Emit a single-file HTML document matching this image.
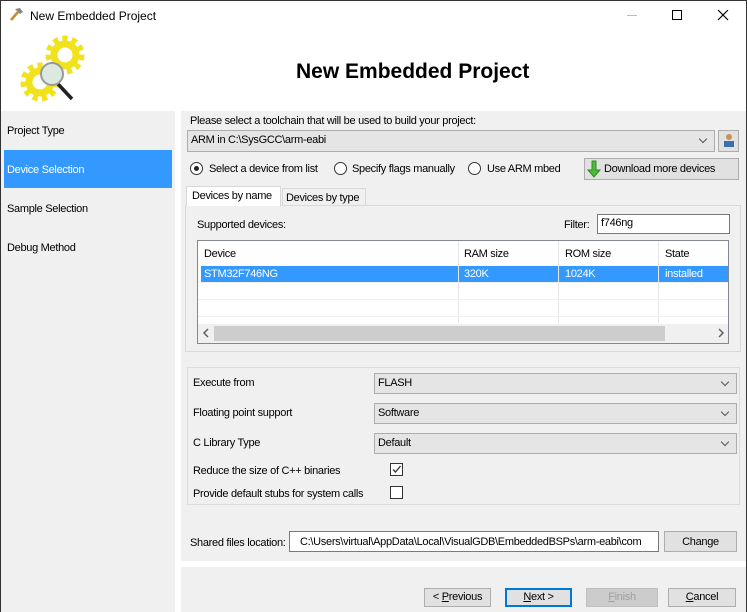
<!DOCTYPE html>
<html><head><style>
*{box-sizing:border-box;margin:0;padding:0}
body{width:747px;height:612px;background:#fff;font-family:"Liberation Sans",sans-serif;font-size:11px;letter-spacing:-0.3px;color:#000;position:relative;overflow:hidden}
.a{position:absolute}
.win{left:0;top:0;width:747px;height:612px;border:1px solid #333;border-bottom:none}
.t{white-space:nowrap}
.combo{background:#e5e5e5;border:1px solid #adadad;height:21px}
.combo .v{position:absolute;left:3px;top:3px}
.combo .ar{position:absolute;right:8px;top:5px;width:6px;height:6px;border-right:1px solid #555;border-bottom:1px solid #555;transform:rotate(45deg)}
.btn{background:#e1e1e1;border:1px solid #adadad;text-align:center;line-height:20px}
.radio{width:13px;height:13px;border:1px solid #333;border-radius:50%;background:#fff}
.chk{width:13px;height:13px;border:1px solid #333;background:#fff}
</style></head><body>
<div class="a win"></div>
<svg class="a" style="left:8px;top:6px" width="16" height="16"><path d="M3 14 L10 6" stroke="#c88a2a" stroke-width="2.5"/><path d="M7 3 L12 2 L15 6 L12 8 Z" fill="#888"/></svg>
<div class="a t" style="left:30px;top:9px;font-size:12px;letter-spacing:0">New Embedded Project</div>
<div class="a" style="left:627px;top:15px;width:10px;height:1px;background:#bbb"></div>
<div class="a" style="left:672px;top:10px;width:10px;height:10px;border:1px solid #000"></div>
<svg class="a" style="left:717px;top:9px" width="12" height="12"><path d="M1 1L11 11M11 1L1 11" stroke="#000" stroke-width="1.2"/></svg>
<svg class="a" style="left:14px;top:32px" width="72" height="75" viewBox="0 0 72 75">
<circle cx="51" cy="23" r="16" fill="none" stroke="#f2e21e" stroke-width="7" stroke-dasharray="5 4.1"/>
<circle cx="51" cy="23" r="11" fill="none" stroke="#f2e21e" stroke-width="7"/>
<circle cx="26" cy="50" r="16" fill="none" stroke="#f2e21e" stroke-width="7" stroke-dasharray="5 4.1"/>
<circle cx="26" cy="50" r="11" fill="none" stroke="#f2e21e" stroke-width="7"/>
<path d="M44 52 L58 67" stroke="#222" stroke-width="3.5"/>
<circle cx="38" cy="42" r="11" fill="#dbe9e0" stroke="#999" stroke-width="2"/>
</svg>
<div class="a t" style="left:296px;top:60px;font-size:21px;font-weight:bold;letter-spacing:0">New Embedded Project</div>
<div class="a" style="left:1px;top:111px;width:174px;height:501px;background:#f0f0f0"></div>
<div class="a t" style="left:7px;top:125px">Project Type</div>
<div class="a" style="left:4px;top:150px;width:168px;height:38px;background:#3399ff"></div>
<div class="a t" style="left:7px;top:164px;color:#fff">Device Selection</div>
<div class="a t" style="left:7px;top:203px">Sample Selection</div>
<div class="a t" style="left:7px;top:242px">Debug Method</div>
<div class="a" style="left:181px;top:111px;width:565px;height:450px;background:#f0f0f0"></div>
<div class="a t" style="left:190px;top:115px">Please select a toolchain that will be used to build your project:</div>
<div class="a combo" style="left:187px;top:130px;width:528px;height:22px"><span class="v t">ARM in C:\SysGCC\arm-eabi</span><span class="ar"></span></div>
<div class="a btn" style="left:718px;top:130px;width:21px;height:22px"></div>
<svg class="a" style="left:721px;top:132px" width="16" height="16"><circle cx="8" cy="5" r="3" fill="#c8905a"/><rect x="3" y="9" width="10" height="6" fill="#3a6fb0"/></svg>
<div class="a radio" style="left:190px;top:162px"></div><div class="a" style="left:194px;top:166px;width:5px;height:5px;border-radius:50%;background:#222"></div>
<div class="a t" style="left:209px;top:163px">Select a device from list</div>
<div class="a radio" style="left:334px;top:162px"></div>
<div class="a t" style="left:352px;top:163px">Specify flags manually</div>
<div class="a radio" style="left:468px;top:162px"></div>
<div class="a t" style="left:487px;top:163px">Use ARM mbed</div>
<div class="a btn" style="left:584px;top:158px;width:155px;height:22px"></div>
<svg class="a" style="left:587px;top:160px" width="14" height="18"><path d="M5 1h4v9h4l-6 7-6-7h4z" fill="#4cbb3a" stroke="#2e8a22"/></svg>
<div class="a t" style="left:604px;top:163px">Download more devices</div>
<div class="a" style="left:185px;top:205px;width:556px;height:147px;background:#fff;border:1px solid #d9d9d9"></div>
<div class="a" style="left:186px;top:186px;width:95px;height:21px;background:#fff;border:1px solid #d9d9d9;border-bottom:none"></div>
<div class="a t" style="left:192px;top:190px">Devices by name</div>
<div class="a" style="left:282px;top:188px;width:84px;height:18px;background:#f0f0f0;border:1px solid #d9d9d9"></div>
<div class="a t" style="left:286px;top:192px">Devices by type</div>
<div class="a" style="left:186px;top:206px;width:554px;height:145px;background:#f0f0f0"></div>
<div class="a t" style="left:197px;top:219px">Supported devices:</div>
<div class="a t" style="left:564px;top:219px">Filter:</div>
<div class="a" style="left:597px;top:214px;width:133px;height:20px;background:#fff;border:1px solid #7a7a7a"></div>
<div class="a t" style="left:601px;top:217px">f746ng</div>
<div class="a" style="left:197px;top:240px;width:532px;height:104px;background:#fff;border:1px solid #828790"></div>
<div class="a" style="left:458px;top:241px;width:1px;height:82px;background:#e5e5e5"></div>
<div class="a" style="left:558px;top:241px;width:1px;height:82px;background:#e5e5e5"></div>
<div class="a" style="left:658px;top:241px;width:1px;height:82px;background:#e5e5e5"></div>
<div class="a" style="left:198px;top:282px;width:530px;height:1px;background:#f0f0f0"></div>
<div class="a" style="left:198px;top:299px;width:530px;height:1px;background:#f0f0f0"></div>
<div class="a" style="left:198px;top:316px;width:530px;height:1px;background:#f0f0f0"></div>
<div class="a t" style="left:204px;top:248px">Device</div>
<div class="a t" style="left:464px;top:248px">RAM size</div>
<div class="a t" style="left:565px;top:248px">ROM size</div>
<div class="a t" style="left:665px;top:248px">State</div>
<div class="a" style="left:201px;top:266px;width:527px;height:16px;background:#3399ff"></div>
<div class="a" style="left:458px;top:266px;width:1px;height:16px;background:#e5e5e5"></div>
<div class="a" style="left:558px;top:266px;width:1px;height:16px;background:#e5e5e5"></div>
<div class="a" style="left:658px;top:266px;width:1px;height:16px;background:#e5e5e5"></div>
<div class="a t" style="left:204px;top:268px;color:#fff">STM32F746NG</div>
<div class="a t" style="left:464px;top:268px;color:#fff">320K</div>
<div class="a t" style="left:565px;top:268px;color:#fff">1024K</div>
<div class="a t" style="left:665px;top:268px;color:#fff">installed</div>
<div class="a" style="left:198px;top:324px;width:530px;height:19px;background:#f0f0f0"></div>
<div class="a" style="left:214px;top:326px;width:451px;height:15px;background:#cdcdcd"></div>
<svg class="a" style="left:202px;top:328px" width="8" height="10"><path d="M6 1L2 5L6 9" stroke="#606060" fill="none" stroke-width="1.5"/></svg>
<svg class="a" style="left:717px;top:328px" width="8" height="10"><path d="M2 1L6 5L2 9" stroke="#606060" fill="none" stroke-width="1.5"/></svg>
<div class="a" style="left:187px;top:367px;width:553px;height:138px;border:1px solid #dcdcdc"></div>
<div class="a t" style="left:193px;top:377px">Execute from</div>
<div class="a combo" style="left:374px;top:373px;width:363px;height:21px"><span class="v t">FLASH</span><span class="ar"></span></div>
<div class="a t" style="left:193px;top:407px">Floating point support</div>
<div class="a combo" style="left:374px;top:403px;width:363px;height:21px"><span class="v t">Software</span><span class="ar"></span></div>
<div class="a t" style="left:193px;top:437px">C Library Type</div>
<div class="a combo" style="left:374px;top:433px;width:363px;height:21px"><span class="v t">Default</span><span class="ar"></span></div>
<div class="a t" style="left:193px;top:465px">Reduce the size of C++ binaries</div>
<div class="a chk" style="left:390px;top:463px"></div>
<svg class="a" style="left:391px;top:464px" width="11" height="11"><path d="M2 5.5L4.5 8L9.5 2" stroke="#333" fill="none" stroke-width="1.3"/></svg>
<div class="a t" style="left:193px;top:488px">Provide default stubs for system calls</div>
<div class="a chk" style="left:390px;top:486px"></div>
<div class="a t" style="left:190px;top:537px">Shared files location:</div>
<div class="a" style="left:289px;top:531px;width:370px;height:21px;background:#fff;border:1px solid #7a7a7a;overflow:hidden"></div>
<div class="a t" style="left:300px;top:536px;width:356px;overflow:hidden">C:\Users\virtual\AppData\Local\VisualGDB\EmbeddedBSPs\arm-eabi\com</div>
<div class="a btn" style="left:664px;top:531px;width:73px;height:21px">Change</div>
<div class="a" style="left:181px;top:567px;width:565px;height:45px;background:#f0f0f0"></div>
<div class="a btn" style="left:424px;top:588px;width:67px;height:19px;line-height:17px">&lt; <u>P</u>revious</div>
<div class="a btn" style="left:505px;top:588px;width:67px;height:19px;line-height:15px;border:2px solid #0078d7"><u>N</u>ext &gt;</div>
<div class="a btn" style="left:586px;top:588px;width:72px;height:19px;line-height:17px;color:#a0a0a0;background:#cccccc;border-color:#bfbfbf"><u>F</u>inish</div>
<div class="a btn" style="left:668px;top:588px;width:68px;height:19px;line-height:17px"><u>C</u>ancel</div>
</body></html>
